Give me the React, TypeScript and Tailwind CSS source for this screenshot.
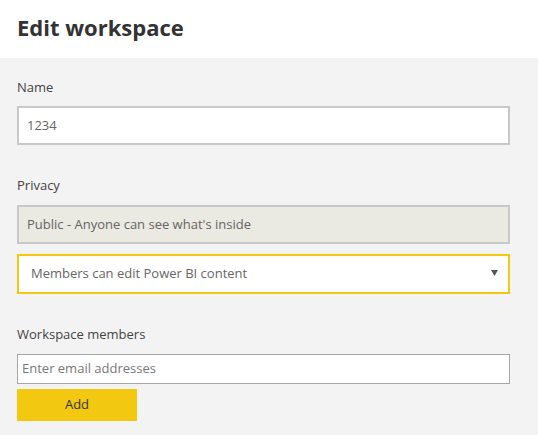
export default function App() {
  return (
    <div className="min-h-[435px] w-[538px] bg-[#f3f3f3] font-['Open_Sans',sans-serif] text-[#333]">
      {/* Header */}
      <header className="flex h-[58px] items-center bg-white pb-[4px] pl-[17px]">
        <h1 className="text-[22px] font-bold leading-none text-[#333]">Edit workspace</h1>
      </header>

      <div className="pr-[28px] pl-[17px]">
        {/* Name */}
        <label className="mt-[19px] block text-[13px] leading-[20px] text-[#444]">Name</label>
        <div className="mt-[9px] flex h-[39px] items-center border-2 border-[#c8c8c8] bg-white px-[8px] text-[13px] text-[#666]">
          1234
        </div>

        {/* Privacy */}
        <label className="mt-[30px] block text-[13px] leading-[20px] text-[#444]">Privacy</label>
        <div className="mt-[10px] flex h-[39px] items-center border-2 border-[#c8c8c8] bg-[#eae9e2] px-[8px] text-[13px] text-[#666]">
          Public - Anyone can see what's inside
        </div>
        <div className="mt-[10px] flex h-[40px] items-center justify-between border-2 border-[#f2c811] bg-white pr-[10px] pl-[12px] text-[13px] text-[#666]">
          <span>Members can edit Power BI content</span>
          <svg width="7" height="6" viewBox="0 0 7 6" className="mb-[2px]">
            <path d="M0 0h7L3.5 6z" fill="#555" />
          </svg>
        </div>

        {/* Members */}
        <label className="mt-[30px] block text-[13px] leading-[20px] text-[#444]">Workspace members</label>
        <div className="mt-[10px] flex h-[30px] items-center border border-[#a6a6a6] bg-white px-[4px] text-[13px] text-[#777]">
          Enter email addresses
        </div>
        <button className="mt-[5px] flex h-[32px] w-[120px] items-center justify-center bg-[#f2c811] text-[13px] text-[#333]">
          Add
        </button>
      </div>
    </div>
  );
}
